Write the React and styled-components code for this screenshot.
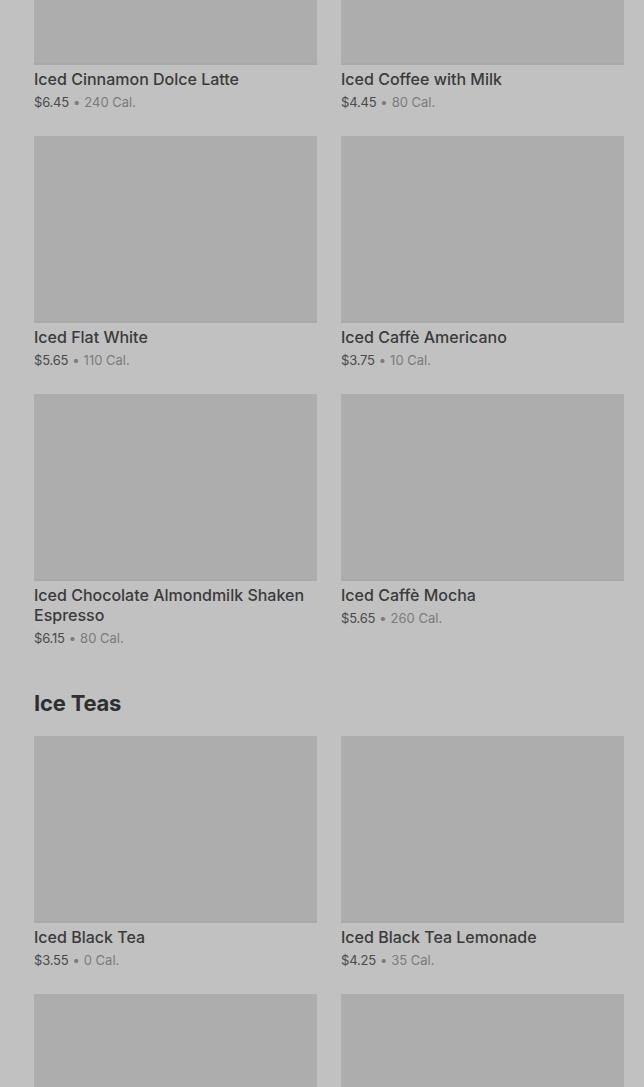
import React from "react";
import styled, { createGlobalStyle } from "styled-components";

const GlobalStyle = createGlobalStyle`
  html, body {
    margin: 0;
    padding: 0;
    background: #c1c1c1;
    overflow: hidden;
  }
  body {
    font-family: Inter, "Noto Sans", "Liberation Sans", sans-serif;
  }
`;

const Page = styled.main`
  padding: 0 20px 0 34px;
  margin-top: -122px;
  height: 1209px;
  overflow: hidden;
`;

const Section = styled.section`
  display: flex;
  flex-direction: column;
`;

const Heading = styled.h2`
  margin: 40px 0 17px;
  font-size: 22px;
  line-height: 32px;
  font-weight: 700;
  color: #2f2f2f;
  letter-spacing: -0.2px;
`;

const Grid = styled.div`
  display: grid;
  grid-template-columns: 1fr 1fr;
  column-gap: 24px;
  row-gap: 25px;
`;

const Card = styled.article`
  display: flex;
  flex-direction: column;
`;

const Thumb = styled.div`
  height: 187px;
  background: #adadad;
  box-shadow: inset 0 -2px 0 #a9a9a9;
`;

const Title = styled.h3`
  margin: 4px 0 0;
  font-size: 16px;
  line-height: 20px;
  font-weight: 500;
  color: #3b3b3b;
`;

const Meta = styled.p`
  margin: 4px 0 0;
  font-size: 13px;
  line-height: 18px;
  color: #7b7b7b;
`;

const Price = styled.span`
  color: #4a4a4a;
  letter-spacing: -0.2px;
`;

const Dot = styled.span`
  margin: 0 4px;
`;

const coffees = [
  { name: "Iced Cinnamon Dolce Latte", price: "$6.45", cal: "240 Cal." },
  { name: "Iced Coffee with Milk", price: "$4.45", cal: "80 Cal." },
  { name: "Iced Flat White", price: "$5.65", cal: "110 Cal." },
  { name: "Iced Caffè Americano", price: "$3.75", cal: "10 Cal." },
  { name: "Iced Chocolate Almondmilk Shaken Espresso", price: "$6.15", cal: "80 Cal." },
  { name: "Iced Caffè Mocha", price: "$5.65", cal: "260 Cal." },
];

const teas = [
  { name: "Iced Black Tea", price: "$3.55", cal: "0 Cal." },
  { name: "Iced Black Tea Lemonade", price: "$4.25", cal: "35 Cal." },
  { name: "Iced Green Tea", price: "$3.55", cal: "0 Cal." },
  { name: "Iced Green Tea Lemonade", price: "$4.25", cal: "35 Cal." },
];

const Item = ({ item }) => (
  <Card>
    <Thumb />
    <Title>{item.name}</Title>
    <Meta>
      <Price>{item.price}</Price>
      <Dot>•</Dot>
      {item.cal}
    </Meta>
  </Card>
);

const App = () => {
  return (
    <>
      <GlobalStyle />
      <Page>
        <Section>
          <Grid>
            {coffees.map((c) => (
              <Item key={c.name} item={c} />
            ))}
          </Grid>
        </Section>
        <Section>
          <Heading>Ice Teas</Heading>
          <Grid>
            {teas.map((t) => (
              <Item key={t.name} item={t} />
            ))}
          </Grid>
        </Section>
      </Page>
    </>
  );
};

export default App;
